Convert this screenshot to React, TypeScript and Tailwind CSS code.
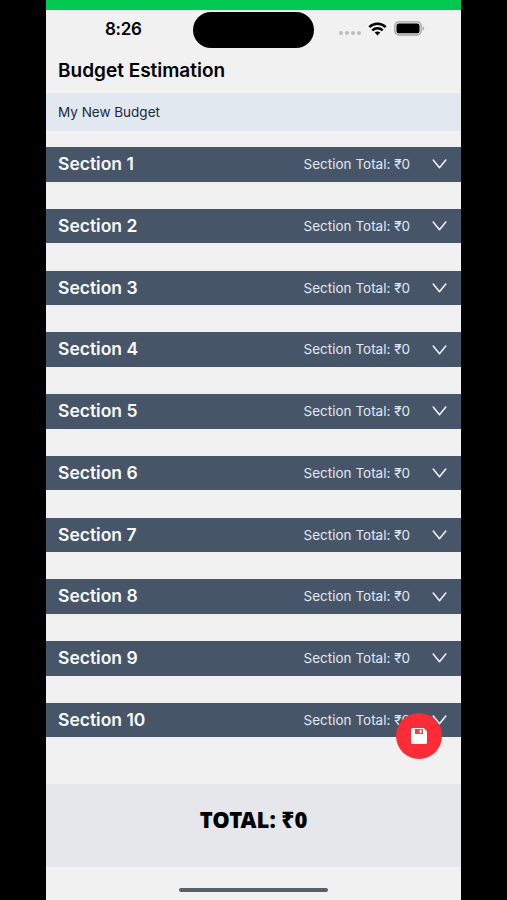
import { useState } from "react";

interface Section {
    id: number;
    name: string;
    total: number;
}

const initialSections: Section[] = Array.from({ length: 10 }, (_, i) => ({
    id: i + 1,
    name: `Section ${i + 1}`,
    total: 0,
}));

const StatusBar = () => (
    <div className="flex h-[41px] shrink-0 items-start justify-between pl-[59px] pr-9 pt-[2.5px]">
        <span className="w-[88px] pt-[5px] text-[17px] font-semibold leading-6 tracking-[-0.3px]">8:26</span>
        <div className="h-[35.5px] w-[121.5px] rounded-full bg-black" />
        <div className="flex w-[111px] items-center justify-end pt-[9px]">
            <div className="mr-[7px] mt-[9px] flex gap-[2px]">
                {[0, 1, 2, 3].map((dot) => (
                    <span key={dot} className="h-[4px] w-[4px] rounded-full bg-[#bdbdbd]" />
                ))}
            </div>
            <svg className="mr-[7px] h-[14px] w-[19px]" viewBox="0 0 19 14" fill="none" stroke="#000" strokeWidth="2.6">
                <path d="M1.3 5.1C6 .6 13 .6 17.7 5.1" />
                <path d="M4.3 8.4C7.3 5.6 11.7 5.6 14.7 8.4" />
                <path d="M6.7 10.6C8.3 9.2 10.7 9.2 12.3 10.6L9.5 13.6Z" fill="#000" stroke="none" />
            </svg>
            <svg className="h-[15px] w-[31px]" viewBox="0 0 31 15">
                <rect x=".8" y=".8" width="26.4" height="13.2" rx="4" fill="#e2e2e2" stroke="#a5a5a5" strokeWidth="1.3" />
                <rect x="2.5" y="2.5" width="23" height="9.8" rx="2.6" fill="#000" />
                <path d="M28.8 5.2C30.8 6 30.8 8.8 28.8 9.6Z" fill="#a5a5a5" />
            </svg>
        </div>
    </div>
);

const SectionRow = ({ section, onToggle }: { section: Section; onToggle: () => void }) => (
    <button
        onClick={onToggle}
        className="flex h-[34.5px] w-full shrink-0 items-center bg-[#475569] pl-3 pr-[14px] text-left"
    >
        <span className="flex-1 text-[17.5px] font-semibold text-slate-50">{section.name}</span>
        <span className="mr-[22px] text-[13.5px] text-slate-200">Section Total: ₹{section.total}</span>
        <svg className="h-[10px] w-[15px]" viewBox="0 0 15 10" fill="none" stroke="#f1f5f9" strokeWidth="1.5">
            <path d="M1.2 1L7.5 8.7L13.8 1" strokeLinecap="round" strokeLinejoin="round" />
        </svg>
    </button>
);

export default function App() {
    const [sections] = useState<Section[]>(initialSections);
    const [openId, setOpenId] = useState<number | null>(null);

    const total = sections.reduce((sum, s) => sum + s.total, 0);

    return (
        <div className="flex h-[900px] w-[507px] justify-center overflow-hidden bg-black font-['Inter','Noto_Sans',sans-serif] text-black">
            <div className="relative flex h-full w-[415px] flex-col bg-[#f1f1f1]">
                <div className="h-[9.5px] shrink-0 bg-green-500" />
                <StatusBar />
                <h1 className="flex h-[42px] shrink-0 items-center pl-3 text-[19px] font-semibold">Budget Estimation</h1>
                <input
                    defaultValue="My New Budget"
                    className="h-[38.5px] w-full shrink-0 bg-slate-200 px-3 text-[13.5px] text-slate-800 outline-none"
                />
                <div className="mt-4 flex h-[637px] shrink-0 flex-col gap-[27.25px]">
                    {sections.map((section) => (
                        <SectionRow
                            key={section.id}
                            section={section}
                            onToggle={() => setOpenId(openId === section.id ? null : section.id)}
                        />
                    ))}
                </div>
                <div className="flex h-[82.5px] shrink-0 justify-center bg-gray-200 pt-[19px]">
                    <span className="font-['Noto_Sans',sans-serif] text-[22px] font-black leading-8">TOTAL: ₹{total}</span>
                </div>
                <div className="flex flex-1 justify-center pt-[21px]">
                    <div className="h-[4.5px] w-[149px] rounded-full bg-[#5b6065]" />
                </div>

                <button className="absolute right-[19.5px] top-[713px] flex h-[46px] w-[46px] items-center justify-center rounded-full bg-red-500">
                    <svg className="h-4 w-4" viewBox="0 0 16 16">
                        <path d="M1.6 0H12.8L16 3.2V14.4Q16 16 14.4 16H1.6Q0 16 0 14.4V1.6Q0 0 1.6 0Z" fill="#fff" />
                        <path d="M4 1H12V6H4Z" fill="#ef4444" />
                        <path d="M8.7 1.7H10.5V5H8.7Z" fill="#fff" />
                    </svg>
                </button>
            </div>
        </div>
    );
}
